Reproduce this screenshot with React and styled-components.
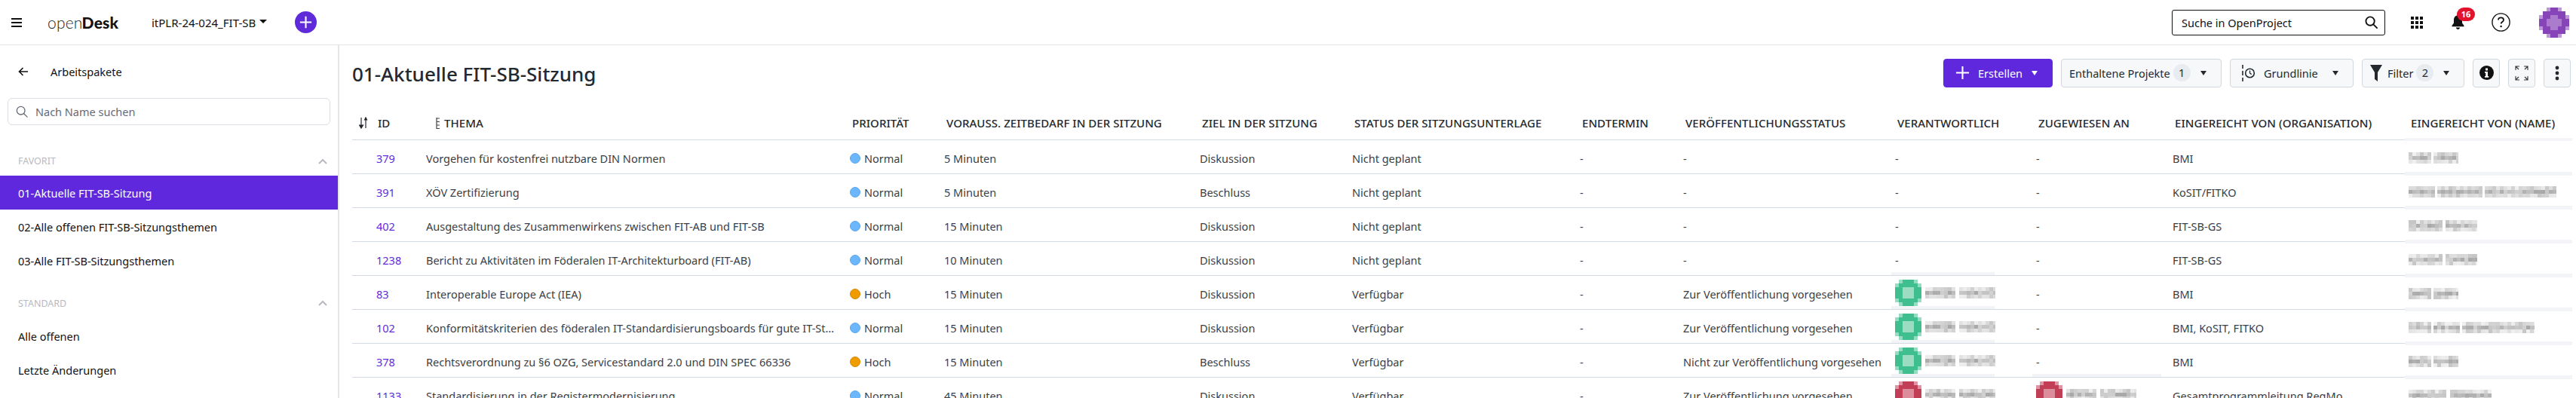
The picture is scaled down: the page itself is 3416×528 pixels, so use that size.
import React from 'react';
import styled, { createGlobalStyle } from 'styled-components';

const GlobalStyle = createGlobalStyle`
  html, body {
    margin: 0;
    padding: 0;
    background: #fff;
    font-family: "Noto Sans", "Open Sans", sans-serif;
    font-size: 14.5px;
    color: #24292f;
  }
`;

const COLUMNS = '94px 562px 125px 339px 202px 302px 137px 281px 187px 181px 313px 220px';

const Page = styled.div`
  display: flex;
  flex-direction: column;
  width: 3416px;
  height: 528px;
  overflow: hidden;
`;

const TopBar = styled.header`
  display: flex;
  align-items: center;
  flex: none;
  height: 59px;
  box-sizing: content-box;
  border-bottom: 1px solid #e4e4e4;
  padding-right: 9px;
`;

const Burger = styled.div`
  display: flex;
  flex-direction: column;
  gap: 3px;
  width: 14px;
  margin: 0 34px 0 15px;
  span {
    height: 2px;
    background: #111;
  }
`;

const Logo = styled.div`
  width: 138px;
  font-family: Lato, sans-serif;
  font-size: 21px;
  line-height: 24px;
  letter-spacing: 0.2px;
  color: #1d1d1d;
  font-weight: 300;
  b {
    font-weight: 900;
    color: #111;
    margin-left: -1px;
  }
`;

const ProjectName = styled.div`
  display: flex;
  align-items: center;
  gap: 5px;
  width: 190px;
  font-size: 15px;
  color: #111;
  &::after {
    content: '';
    border: 5px solid transparent;
    border-top: 5px solid #111;
    border-bottom: 0;
    margin-top: -3px;
  }
`;

const RoundPlus = styled.div`
  display: flex;
  width: 29px;
  height: 29px;
  border-radius: 50%;
  background: #5f2ad9;
  align-items: center;
  justify-content: center;
`;

const GlobalSearch = styled.div`
  display: flex;
  align-items: center;
  justify-content: space-between;
  box-sizing: border-box;
  width: 283px;
  height: 34px;
  margin-left: auto;
  padding: 0 9px 0 12px;
  border: 1px solid #111;
  border-radius: 3px;
  color: #111;
`;

const HeaderIcons = styled.div`
  display: flex;
  align-items: center;
  margin-left: 34px;
`;

const BellWrap = styled.div`
  position: relative;
  display: flex;
  margin-left: 38px;
`;

const Badge = styled.span`
  position: absolute;
  top: -9px;
  left: 7px;
  width: 24px;
  height: 18px;
  border-radius: 9px;
  background: #e3132d;
  color: #fff;
  font-size: 11px;
  font-weight: 700;
  line-height: 18px;
  text-align: center;
`;

const HelpIcon = styled.div`
  display: flex;
  margin-left: 36px;
`;

const Avatar = styled.div`
  display: flex;
  margin-left: 38px;
`;

const Body = styled.div`
  display: flex;
  flex: 1;
  min-height: 0;
`;

const Sidebar = styled.aside`
  flex: none;
  width: 448px;
  border-right: 2px solid #e4e6ea;
`;

const BackRow = styled.div`
  display: flex;
  align-items: center;
  height: 70px;
  padding-left: 24px;
  gap: 30px;
  color: #111;
`;

const SideSearch = styled.div`
  display: flex;
  align-items: center;
  gap: 10px;
  box-sizing: border-box;
  height: 36px;
  margin: 0 10px;
  padding-left: 10px;
  border: 1px solid #d9dee5;
  border-radius: 6px;
  color: #646b75;
`;

const GroupTitle = styled.div`
  display: flex;
  align-items: center;
  justify-content: space-between;
  box-sizing: border-box;
  height: ${(p) => p.$height}px;
  padding: ${(p) => p.$top}px 14px 0 24px;
  font-size: 12.5px;
  color: #b7babf;
`;

const SideItem = styled.div`
  display: flex;
  align-items: center;
  height: 45px;
  padding-left: 24px;
  color: ${(p) => (p.$active ? '#fff' : '#111')};
  background: ${(p) => (p.$active ? '#5f28dc' : 'transparent')};
`;

const Main = styled.main`
  flex: 1;
  min-width: 0;
  padding: 0 6px 0 17px;
`;

const TitleRow = styled.div`
  display: flex;
  align-items: center;
  justify-content: space-between;
  box-sizing: border-box;
  height: 81px;
  padding: 0 1px 8px 0;
`;

const Title = styled.h1`
  margin: 3px 0 0;
  font-size: 26px;
  font-weight: 500;
  color: #24292f;
`;

const Toolbar = styled.div`
  display: flex;
  gap: 11px;
`;

const ToolButton = styled.div`
  display: flex;
  align-items: center;
  justify-content: ${(p) => (p.$square ? 'center' : 'flex-start')};
  box-sizing: border-box;
  width: ${(p) => p.$width}px;
  height: 38px;
  padding: 0 ${(p) => (p.$square ? 0 : 19)}px 0 ${(p) => p.$pad || 0}px;
  gap: ${(p) => p.$gap || 4}px;
  border: 1px solid ${(p) => (p.$primary ? '#5f28dc' : '#d0d7de')};
  border-radius: 4px;
  background: ${(p) => (p.$primary ? '#5f28dc' : '#f6f8fa')};
  color: ${(p) => (p.$primary ? '#fff' : '#24292f')};
`;

const Caret = styled.span`
  margin-left: auto;
  border: 4.5px solid transparent;
  border-top: 6px solid ${(p) => (p.$light ? '#fff' : '#24292f')};
  border-bottom: 0;
`;

const Count = styled.span`
  display: inline-block;
  width: 23px;
  height: 23px;
  border-radius: 50%;
  background: #e8ebef;
  line-height: 23px;
  text-align: center;
`;

const FunnelSlot = styled.span`
  display: flex;
  margin-right: 3px;
`;

const Row = styled.div`
  display: grid;
  grid-template-columns: ${COLUMNS};
  height: 45px;
  box-sizing: border-box;
  border-bottom: 1px solid #d3dae3;
`;

const Cell = styled.div`
  position: relative;
  display: flex;
  align-items: center;
  box-sizing: border-box;
  min-width: 0;
  padding: 3px 0 0 4px;
  white-space: nowrap;
  color: #3b4046;
  ${(p) =>
    p.$band &&
    `&::after {
      content: '';
      position: absolute;
      left: -1px;
      bottom: ${p.$bandBottom}px;
      width: ${p.$band}px;
      height: ${p.$bandHeight}px;
      background: #f2f4f7;
    }`}
`;

const HeadCell = styled(Cell)`
  padding: 0 0 0 7px;
  font-size: 15px;
  font-weight: 500;
  letter-spacing: 0.05px;
  color: #24292f;
`;

const SortHead = styled(HeadCell)`
  padding-left: 9px;
  gap: 13px;
`;

const SubjectHead = styled(HeadCell)`
  padding-left: 17px;
  gap: 5px;
`;

const IdCell = styled(Cell)`
  padding-left: 32px;
  color: #5f2ce0;
`;

const SubjectCell = styled(Cell)`
  padding-right: 11px;
  span {
    overflow: hidden;
    text-overflow: ellipsis;
  }
`;

const Dot = styled.i`
  flex: none;
  width: 14px;
  height: 14px;
  margin-right: 5px;
  border-radius: 50%;
  box-sizing: border-box;
  background: ${(p) => (p.$high ? '#f09c00' : '#6cb6fb')};
  border: 1px solid ${(p) => (p.$high ? '#d38900' : '#5aa6ef')};
`;

const Person = styled.div`
  display: flex;
  align-items: center;
  gap: 5px;
  margin-top: -3px;
`;

const noise = (i, j, seed) => {
  const v = Math.sin(i * 12.9898 + j * 78.233 + seed * 37.719) * 43758.5453;
  return v - Math.floor(v);
};

// pixelated name, one run of blocks per word
function Smudge({ words, seed = 1 }) {
  const total = words.reduce((sum, w) => sum + w, 0) + (words.length - 1) * 5;
  const blocks = [];
  let x = 0;
  words.forEach((w, k) => {
    for (let i = 0; i < Math.ceil(w / 5); i += 1) {
      for (let j = 0; j < 3; j += 1) {
        const base = j === 1 ? 0.3 : 0.1;
        blocks.push(
          <rect
            key={`${k}-${i}-${j}`}
            x={x + i * 5}
            y={j * 5}
            width="5"
            height="5"
            fill="#6d6d6d"
            opacity={base + noise(i + k * 9, j, seed) * 0.3}
          />,
        );
      }
    }
    x += w + 5;
  });
  return (
    <svg width={total} height="15" viewBox={`0 0 ${total} 15`}>
      {blocks}
    </svg>
  );
}

// pixelated round portrait
function PixelFace({ color, light, cells = 7, size = 5 }) {
  const blocks = [];
  const mid = (cells - 1) / 2;
  for (let i = 0; i < cells; i += 1) {
    for (let j = 0; j < cells; j += 1) {
      const d = Math.hypot(i - mid, j - mid);
      if (d > mid + 0.7) continue;
      const opacity = d > mid + 0.3 ? 0.55 : 1;
      const fill = d < mid * 0.5 ? light : color;
      blocks.push(
        <rect key={`${i}-${j}`} x={i * size} y={j * size} width={size} height={size} fill={fill} opacity={opacity} />,
      );
    }
  }
  const full = cells * size;
  return (
    <svg width={full} height={full} viewBox={`0 0 ${full} ${full}`}>
      {blocks}
    </svg>
  );
}

const Plus = ({ size, width = 2.4, color = '#fff' }) => (
  <svg width={size} height={size} viewBox="0 0 20 20">
    <path d="M10 1v18M1 10h18" stroke={color} strokeWidth={width} fill="none" />
  </svg>
);

const SearchIcon = ({ size = 18, color = '#111', width = 2 }) => (
  <svg width={size} height={size} viewBox="0 0 18 18" fill="none" stroke={color} strokeWidth={width}>
    <circle cx="7.5" cy="7.5" r="6" />
    <path d="M12 12l5 5" strokeLinecap="round" />
  </svg>
);

const Chevron = () => (
  <svg width="12" height="8" viewBox="0 0 12 8" fill="none" stroke="#b7babf" strokeWidth="2">
    <path d="M1 7l5-5 5 5" />
  </svg>
);

const BackArrow = () => (
  <svg width="13" height="12" viewBox="0 0 13 12" fill="none" stroke="#111" strokeWidth="1.6">
    <path d="M13 6H1.5M6.5 1l-5 5 5 5" />
  </svg>
);

const AppsIcon = () => (
  <svg width="16" height="16" viewBox="0 0 16 16" fill="#111">
    {[0, 6, 12].map((x) =>
      [0, 6, 12].map((y) => <rect key={`${x}-${y}`} x={x} y={y} width="4" height="4" />),
    )}
  </svg>
);

const BellIcon = () => (
  <svg width="17" height="21" viewBox="0 0 17 21" fill="#111">
    <path d="M8.5 0c-.8 0-1.3.6-1.3 1.4C4.6 2 3 4.2 3 7v4.4L.5 15v1.2h16V15L14 11.4V7c0-2.8-1.6-5-4.2-5.6C9.8.6 9.3 0 8.5 0zM6 17.6h5C11 19 9.9 20 8.5 20S6 19 6 17.6z" />
  </svg>
);

const HelpCircle = () => (
  <svg width="25" height="25" viewBox="0 0 25 25" fill="none">
    <circle cx="12.5" cy="12.5" r="11.6" stroke="#111" strokeWidth="1.4" />
    <path d="M9 9.6c0-2 1.6-3.2 3.5-3.2s3.5 1.2 3.5 3c0 2.6-3.4 2.6-3.4 5.2" stroke="#111" strokeWidth="1.8" />
    <circle cx="12.6" cy="18" r="1.2" fill="#111" />
  </svg>
);

const SortIcon = () => (
  <svg width="12" height="16" viewBox="0 0 12 16" fill="none" stroke="#24292f" strokeWidth="1.2">
    <path d="M3 1v13" />
    <path d="M0.5 11L3 15l2.5-4z" fill="#24292f" />
    <path d="M9 15V2" />
    <path d="M7.5 4L9 1l1.5 3z" fill="#24292f" />
  </svg>
);

const GripIcon = () => (
  <svg width="6" height="15" viewBox="0 0 6 15" fill="none" stroke="#444" strokeWidth="1.2">
    <path d="M1 0v15M1 1h4M1 5.5h4M1 10h4M1 14.5h4" />
  </svg>
);

const BaselineIcon = () => (
  <svg width="19" height="24" viewBox="0 0 19 24" fill="none" stroke="#24292f" strokeWidth="1.6">
    <path d="M2 1v5M2 9v6M2 18v5" />
    <circle cx="11.5" cy="12" r="5.8" />
    <path d="M11.5 8.5V12l2.2 1.6" strokeWidth="1.3" />
  </svg>
);

const FunnelIcon = () => (
  <svg width="16" height="24" viewBox="0 0 16 24" fill="#24292f">
    <path d="M0 1h16L10 11v12l-4-3v-9z" />
  </svg>
);

const InfoIcon = () => (
  <svg width="19" height="19" viewBox="0 0 19 19">
    <circle cx="9.5" cy="9.5" r="9.5" fill="#111" />
    <path d="M8 3.5h3v3H8zM7 8h4v6h1.2v1.8H7V14h1.2V9.8H7z" fill="#fff" />
  </svg>
);

const ExpandIcon = () => (
  <svg width="18" height="20" viewBox="0 0 18 20" fill="none" stroke="#333" strokeWidth="1.1">
    <path d="M1 6V1h5M1 1l4 4M17 6V1h-5M17 1l-4 4M1 14v5h5M1 19l4-4M17 14v5h-5M17 19l-4-4" />
  </svg>
);

const KebabIcon = () => (
  <svg width="6" height="20" viewBox="0 0 6 20" fill="#24292f">
    <circle cx="3" cy="3" r="2.4" />
    <circle cx="3" cy="10" r="2.4" />
    <circle cx="3" cy="17" r="2.4" />
  </svg>
);

const GREEN = { color: '#3fbf8f', light: '#9cdcc3' };
const RED = { color: '#c23d56', light: '#db8d9c' };

const HEADERS = [
  'PRIORITÄT',
  'VORAUSS. ZEITBEDARF IN DER SITZUNG',
  'ZIEL IN DER SITZUNG',
  'STATUS DER SITZUNGSUNTERLAGE',
  'ENDTERMIN',
  'VERÖFFENTLICHUNGSSTATUS',
  'VERANTWORTLICH',
  'ZUGEWIESEN AN',
  'EINGEREICHT VON (ORGANISATION)',
];

const ROWS = [
  { id: 379, subject: 'Vorgehen für kostenfrei nutzbare DIN Normen', time: '5 Minuten', goal: 'Diskussion', status: 'Nicht geplant', pub: '-', org: 'BMI', name: [28, 33] },
  { id: 391, subject: 'XÖV Zertifizierung', time: '5 Minuten', goal: 'Beschluss', status: 'Nicht geplant', pub: '-', org: 'KoSIT/FITKO', name: [33, 58, 95] },
  { id: 402, subject: 'Ausgestaltung des Zusammenwirkens zwischen FIT-AB und FIT-SB', time: '15 Minuten', goal: 'Diskussion', status: 'Nicht geplant', pub: '-', org: 'FIT-SB-GS', name: [44, 42] },
  { id: 1238, subject: 'Bericht zu Aktivitäten im Föderalen IT-Architekturboard (FIT-AB)', time: '10 Minuten', goal: 'Diskussion', status: 'Nicht geplant', pub: '-', org: 'FIT-SB-GS', name: [44, 42], ownerBand: true },
  { id: 83, subject: 'Interoperable Europe Act (IEA)', high: true, time: '15 Minuten', goal: 'Diskussion', status: 'Verfügbar', pub: 'Zur Veröffentlichung vorgesehen', org: 'BMI', name: [28, 33], owner: GREEN, ownerBand: true },
  { id: 102, subject: 'Konformitätskriterien des föderalen IT-Standardisierungsboards für gute IT-Standards', time: '15 Minuten', goal: 'Diskussion', status: 'Verfügbar', pub: 'Zur Veröffentlichung vorgesehen', org: 'BMI, KoSIT, FITKO', name: [28, 33, 96], owner: GREEN, ownerBand: true },
  { id: 378, subject: 'Rechtsverordnung zu §6 OZG, Servicestandard 2.0 und DIN SPEC 66336', high: true, time: '15 Minuten', goal: 'Beschluss', status: 'Verfügbar', pub: 'Nicht zur Veröffentlichung vorgesehen', org: 'BMI', name: [28, 33], owner: GREEN, ownerBand: true, assigneeBand: true },
  { id: 1133, subject: 'Standardisierung in der Registermodernisierung', time: '45 Minuten', goal: 'Diskussion', status: 'Verfügbar', pub: 'Zur Veröffentlichung vorgesehen', org: 'Gesamtprogrammleitung RegMo', name: [50, 55], owner: RED, assignee: RED },
];

const OwnerCell = ({ person, band, bandWidth, seed }) => (
  <Cell $band={band ? bandWidth : 0} $bandBottom={0} $bandHeight={4}>
    {person ? (
      <Person>
        <PixelFace color={person.color} light={person.light} />
        <Smudge words={[40, 48]} seed={seed} />
      </Person>
    ) : (
      '-'
    )}
  </Cell>
);

export default function App() {
  return (
    <Page>
      <GlobalStyle />
      <TopBar>
        <Burger>
          <span />
          <span />
          <span />
        </Burger>
        <Logo>
          open<b>Desk</b>
        </Logo>
        <ProjectName>itPLR-24-024_FIT-SB</ProjectName>
        <RoundPlus>
          <Plus size={17} />
        </RoundPlus>
        <GlobalSearch>
          Suche in OpenProject
          <SearchIcon size={17} />
        </GlobalSearch>
        <HeaderIcons>
          <AppsIcon />
          <BellWrap>
            <BellIcon />
            <Badge>16</Badge>
          </BellWrap>
          <HelpIcon>
            <HelpCircle />
          </HelpIcon>
          <Avatar>
            <PixelFace color="#8644b8" light="#ab7ccd" cells={8} size={5} />
          </Avatar>
        </HeaderIcons>
      </TopBar>
      <Body>
        <Sidebar>
          <BackRow>
            <BackArrow />
            Arbeitspakete
          </BackRow>
          <SideSearch>
            <SearchIcon size={16} color="#646b75" width={1.5} />
            Nach Name suchen
          </SideSearch>
          <GroupTitle $height={67} $top={28}>
            FAVORIT
            <Chevron />
          </GroupTitle>
          <SideItem $active>01-Aktuelle FIT-SB-Sitzung</SideItem>
          <SideItem>02-Alle offenen FIT-SB-Sitzungsthemen</SideItem>
          <SideItem>03-Alle FIT-SB-Sitzungsthemen</SideItem>
          <GroupTitle $height={55} $top={13}>
            STANDARD
            <Chevron />
          </GroupTitle>
          <SideItem>Alle offenen</SideItem>
          <SideItem>Letzte Änderungen</SideItem>
        </Sidebar>
        <Main>
          <TitleRow>
            <Title>01-Aktuelle FIT-SB-Sitzung</Title>
            <Toolbar>
              <ToolButton $primary $width={145} $pad={15} $gap={11}>
                <Plus size={19} width={2.2} />
                Erstellen
                <Caret $light />
              </ToolButton>
              <ToolButton $width={213} $pad={10}>
                Enthaltene Projekte
                <Count>1</Count>
                <Caret />
              </ToolButton>
              <ToolButton $width={164} $pad={14} $gap={11}>
                <BaselineIcon />
                Grundlinie
                <Caret />
              </ToolButton>
              <ToolButton $width={136} $pad={10}>
                <FunnelSlot>
                  <FunnelIcon />
                </FunnelSlot>
                Filter
                <Count>2</Count>
                <Caret />
              </ToolButton>
              <ToolButton $square $width={36}>
                <InfoIcon />
              </ToolButton>
              <ToolButton $square $width={36}>
                <ExpandIcon />
              </ToolButton>
              <ToolButton $square $width={36}>
                <KebabIcon />
              </ToolButton>
            </Toolbar>
          </TitleRow>
          <Row>
            <SortHead>
              <SortIcon />
              ID
            </SortHead>
            <SubjectHead>
              <GripIcon />
              THEMA
            </SubjectHead>
            {HEADERS.map((label) => (
              <HeadCell key={label}>{label}</HeadCell>
            ))}
            <HeadCell $band={222} $bandBottom={-2} $bandHeight={4}>
              EINGEREICHT VON (NAME)
            </HeadCell>
          </Row>
          {ROWS.map((row) => (
            <Row key={row.id}>
              <IdCell>{row.id}</IdCell>
              <SubjectCell>
                <span>{row.subject}</span>
              </SubjectCell>
              <Cell>
                <Dot $high={row.high} />
                {row.high ? 'Hoch' : 'Normal'}
              </Cell>
              <Cell>{row.time}</Cell>
              <Cell>{row.goal}</Cell>
              <Cell>{row.status}</Cell>
              <Cell>-</Cell>
              <Cell>{row.pub}</Cell>
              <OwnerCell person={row.owner} band={row.ownerBand} bandWidth={137} seed={row.owner === RED ? 5 : 2} />
              <OwnerCell person={row.assignee} band={row.assigneeBand} bandWidth={171} seed={7} />
              <Cell>{row.org}</Cell>
              <Cell $band={222} $bandBottom={-3} $bandHeight={5}>
                <Smudge words={row.name} seed={row.id} />
              </Cell>
            </Row>
          ))}
        </Main>
      </Body>
    </Page>
  );
}
